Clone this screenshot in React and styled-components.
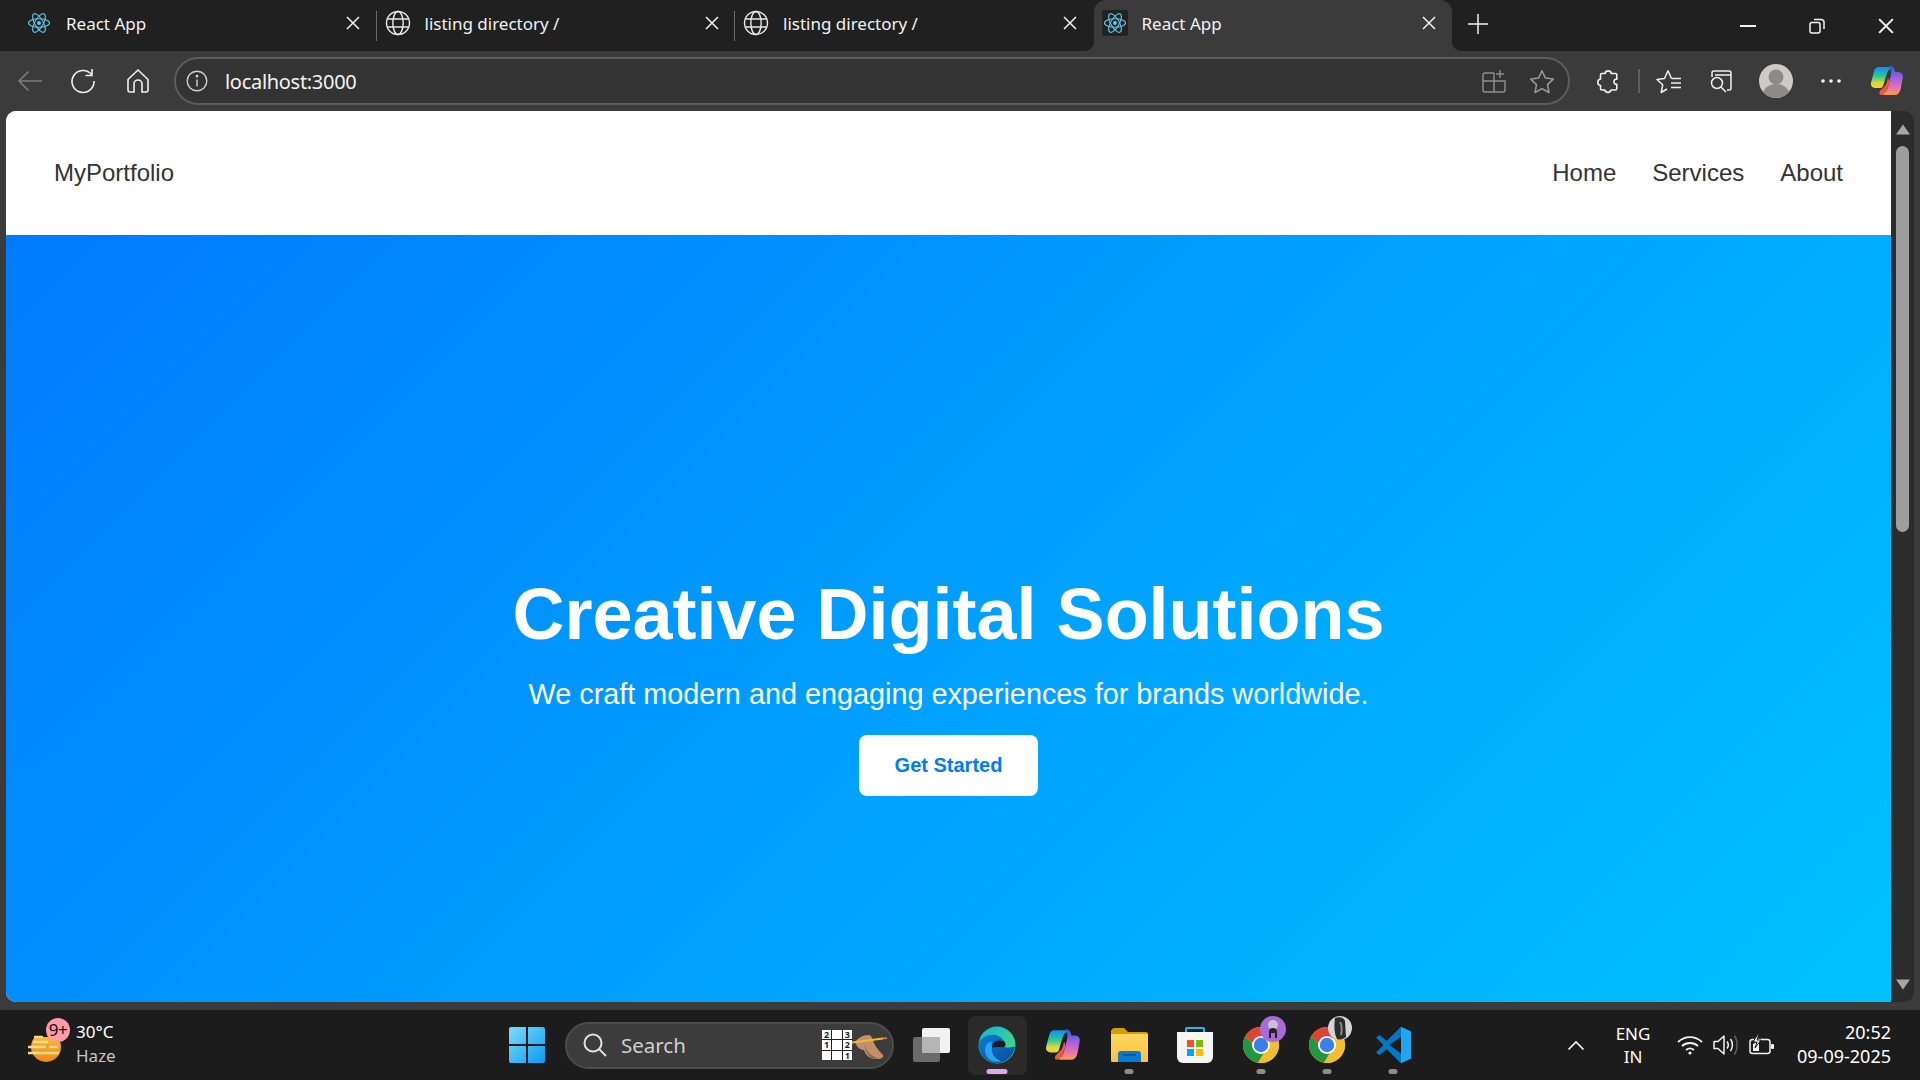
import styled, { createGlobalStyle } from 'styled-components'

const GlobalStyle = createGlobalStyle`
  html, body {
    margin: 0;
    padding: 0;
    height: 100%;
    overflow: hidden;
    background: #1c1c1c;
  }
  * { box-sizing: border-box; }
`

const ReactLogo = () => (
  <svg width="24" height="24" viewBox="-12 -12 24 24" fill="none" stroke="#61c6e6" strokeWidth="1.1">
    <ellipse rx="10.5" ry="4.2" />
    <ellipse rx="10.5" ry="4.2" transform="rotate(60)" />
    <ellipse rx="10.5" ry="4.2" transform="rotate(120)" />
    <circle r="2" fill="#61c6e6" stroke="none" />
  </svg>
)

const GlobeIcon = () => (
  <svg width="26" height="26" viewBox="0 0 26 26" fill="none" stroke="#e8e8e8" strokeWidth="1.4">
    <circle cx="13" cy="13" r="11.5" />
    <ellipse cx="13" cy="13" rx="5.2" ry="11.5" />
    <path d="M2.4 9h21.2M2.4 17h21.2" />
  </svg>
)

const CloseIcon = ({ size = 14, weight = 1.5 }) => (
  <svg width={size} height={size} viewBox="0 0 14 14" stroke="#f2f2f2" strokeWidth={weight}>
    <path d="M1 1l12 12M13 1L1 13" />
  </svg>
)

const BackIcon = () => (
  <svg width="26" height="24" viewBox="0 0 26 24" fill="none" stroke="#7d7d7d" strokeWidth="1.5">
    <path d="M25 12H2M11.5 2.5L2 12l9.5 9.5" />
  </svg>
)

const ReloadIcon = () => (
  <svg width="26" height="26" viewBox="0 0 26 26" fill="none" stroke="#f0f0f0" strokeWidth="1.6">
    <path d="M21.5 6.5A11 11 0 1 0 24 13" />
    <path d="M22 1v6.5h-6.5" />
  </svg>
)

const HomeIcon = () => (
  <svg width="24" height="26" viewBox="0 0 24 26" fill="none" stroke="#f0f0f0" strokeWidth="1.6">
    <path d="M2 11.5L12 2l10 9.5V22a2 2 0 0 1-2 2h-4v-8a4 4 0 0 0-8 0v8H4a2 2 0 0 1-2-2z" />
  </svg>
)

const InfoIcon = () => (
  <svg width="22" height="22" viewBox="0 0 22 22" fill="none" stroke="#d0d0d0" strokeWidth="1.4">
    <circle cx="11" cy="11" r="9.8" />
    <path d="M11 9.5v7" />
    <circle cx="11" cy="6.2" r="0.7" fill="#d0d0d0" />
  </svg>
)

const SplitIcon = () => (
  <svg width="24" height="24" viewBox="0 0 24 24" fill="none" stroke="#8f8f8f" strokeWidth="1.4">
    <path d="M12 4H3a2 2 0 0 0-2 2v15a2 2 0 0 0 2 2h18a2 2 0 0 0 2-2v-9H1M12 4v19" />
    <path d="M18 1v8M14 5h8" />
  </svg>
)

const StarIcon = () => (
  <svg width="26" height="25" viewBox="0 0 26 25" fill="none" stroke="#9a9a9a" strokeWidth="1.5">
    <path d="M13 1.8l3.4 7.3 7.9 1-5.8 5.5 1.5 7.9-7-3.9-7 3.9 1.5-7.9-5.8-5.5 7.9-1z" strokeLinejoin="round" />
  </svg>
)

const PuzzleIcon = () => (
  <svg width="24" height="25" viewBox="0 0 24 25" fill="none" stroke="#f0f0f0" strokeWidth="1.6">
    <path d="M9 4.5a3.2 3.2 0 0 1 6.3 0h4a1.5 1.5 0 0 1 1.5 1.5v4.2c-3.8-.6-3.8 5.600 0 5v4.300a1.500 1.500 0 0 1-1.500 1.500H15a3.200 3.200 0 0 1-6.200 0H6a1.500 1.500 0 0 1-1.500-1.500v-3a3.300 3.300 0 0 1 0-6.500V6A1.500 1.500 0 0 1 6 4.500z" strokeLinejoin="round" />
  </svg>
)

const FavoritesIcon = () => (
  <svg width="26" height="25" viewBox="0 0 26 25" fill="none" stroke="#f0f0f0" strokeWidth="1.5">
    <path d="M15.500 9.500L12 1.800 8.500 9.500l-7.500 1 5.700 5.300L5.200 23.500 11 20" strokeLinejoin="round" />
    <path d="M15.500 9.500H25M15 14h10M15 18.500h10" />
  </svg>
)

const CollectionsIcon = () => (
  <svg width="24" height="24" viewBox="0 0 24 24" fill="none" stroke="#f0f0f0" strokeWidth="1.5">
    <path d="M3 8V4a2 2 0 0 1 2-2h15a2 2 0 0 1 2 2v15a2 2 0 0 1-2 2h-2M6 6h16" />
    <circle cx="8" cy="14" r="5.500" />
    <path d="M12 18l5 5" />
  </svg>
)

const CopilotLogo = ({ size = 36, id = 'cop' }) => (
  <svg width={size} height={size} viewBox="0 0 36 36">
    <defs>
      <linearGradient id={`${id}A`} x1="0" y1="0" x2="0" y2="1">
        <stop offset="0" stopColor="#1592ec" />
        <stop offset="0.45" stopColor="#2fcb8f" />
        <stop offset="0.8" stopColor="#e8d53e" />
      </linearGradient>
      <linearGradient id={`${id}B`} x1="0" y1="0" x2="0" y2="1">
        <stop offset="0" stopColor="#2b5fd8" />
        <stop offset="0.4" stopColor="#a55ee0" />
        <stop offset="0.75" stopColor="#e56fb8" />
        <stop offset="1" stopColor="#f59a5a" />
      </linearGradient>
    </defs>
    <path
      d="M10 5h11c-3 1-4 4-5 8l-3 10c-.5 1-1 1-2 1H6c-2.500 0-3.500-2-3-4l3-11.500C6.500 6 8 5 10 5z"
      fill={`url(#${id}A)`}
      stroke={`url(#${id}A)`}
      strokeWidth="2"
      strokeLinejoin="round"
    />
    <path
      d="M21 4c2 0 3 1 3.500 3l.8 3h4c2.700 0 4 2 3.500 4.500l-2 11c-.8 3.500-2.500 5.500-5.500 5.500H15c3-1 4-3 5-7l3-12c.5-2 .5-5-2-8z"
      fill={`url(#${id}B)`}
      stroke={`url(#${id}B)`}
      strokeWidth="2"
      strokeLinejoin="round"
    />
    <path d="M15 24c2-1 3-5 4-9 1 2 2 3 0 8-1 4-3 9-7 9-2 0-2-2-1-4z" fill="#f0593a" />
  </svg>
)

const WeatherIcon = () => (
  <svg width="36" height="30" viewBox="0 0 36 30">
    <defs>
      <linearGradient id="sun" x1="0" y1="0" x2="0" y2="1">
        <stop offset="0" stopColor="#f9c23c" />
        <stop offset="1" stopColor="#ee8a15" />
      </linearGradient>
    </defs>
    <circle cx="18" cy="14" r="15" fill="url(#sun)" />
    <path d="M0 -2h36v6H0z" fill="#1c1c1c" />
    <path d="M7 4h7M6 9h13M0 14h17M22 14h7M0 20h30" stroke="#f1d992" strokeWidth="2.400" strokeLinecap="round" />
  </svg>
)

const WindowsLogo = () => (
  <svg width="36" height="36" viewBox="0 0 36 36">
    <defs>
      <linearGradient id="win" x1="0" y1="0" x2="1" y2="1">
        <stop offset="0" stopColor="#7ddbfb" />
        <stop offset="1" stopColor="#0a9bf2" />
      </linearGradient>
    </defs>
    <path d="M2 0h15v17H0V2a2 2 0 0 1 2-2zM19 0h15a2 2 0 0 1 2 2v15H19zM0 19h17v17H2a2 2 0 0 1-2-2zM19 19h17v15a2 2 0 0 1-2 2H19z" fill="url(#win)" />
  </svg>
)

const SearchGlass = () => (
  <svg width="24" height="24" viewBox="0 0 24 24" fill="none" stroke="#e0e0e0" strokeWidth="2">
    <circle cx="10" cy="10" r="8.500" />
    <path d="M16 16l7 7" />
  </svg>
)

const SudokuHand = () => (
  <svg width="36" height="30" viewBox="0 0 36 30">
    <path d="M3 12c3-4 8-7 13-7 3 0 4 2 5 5 1 5 5 10 10 15 1 2-1 4-6 4-7 0-11-3-13-9-3 0-7-2-9-8z" fill="#c0916c" />
    <path d="M12 14c3 8 7 13 15 14-6 2-12 0-15-14z" fill="#8f6547" />
    <path d="M0 12.500l31-4" stroke="#f2b632" strokeWidth="2" />
    <path d="M31 8.500l4-.5" stroke="#e0606a" strokeWidth="2" />
  </svg>
)

const TaskViewIcon = () => (
  <svg width="37" height="34" viewBox="0 0 37 34">
    <rect x="0" y="9" width="27" height="25" rx="2" fill="#6b6b6b" />
    <rect x="9" y="0" width="28" height="25" rx="2" fill="#f2f2f2" />
    <rect x="9" y="9" width="18" height="16" rx="1" fill="#b5b5b5" />
  </svg>
)

const EdgeLogo = () => (
  <svg width="38" height="38" viewBox="0 0 38 38">
    <defs>
      <linearGradient id="edgeA" x1="0" y1="0" x2="1" y2="1">
        <stop offset="0" stopColor="#0fb5d8" />
        <stop offset="1" stopColor="#55e06c" />
      </linearGradient>
      <linearGradient id="edgeB" x1="0" y1="0" x2="1" y2="1">
        <stop offset="0" stopColor="#0b7dd8" />
        <stop offset="1" stopColor="#0a4a9c" />
      </linearGradient>
    </defs>
    <circle cx="19" cy="19" r="18.500" fill="url(#edgeA)" />
    <path d="M1 17C4 8 20 5 26 15c2 3 2 5 0 6 7 2 10-2 11 0-1 9-10 17-20 16C7 36 0 27 1 17z" fill="url(#edgeB)" />
    <path d="M14 22c0-6 5-9 11-7 3 1 3 5 1 6-3 1-6-1-12 1z" fill="#1c1c1c" />
    <path d="M14 22c-1 6 3 11 9 13-7 3-16-2-16-11 0-5 3-8 7-9-1 2 0 5 0 7z" fill="#2aa4ef" />
  </svg>
)

const FolderLogo = () => (
  <svg width="37" height="34" viewBox="0 0 37 34">
    <defs>
      <linearGradient id="fold" x1="0" y1="0" x2="0" y2="1">
        <stop offset="0" stopColor="#ffd75e" />
        <stop offset="1" stopColor="#f9c33c" />
      </linearGradient>
    </defs>
    <path d="M1 2a2 2 0 0 1 2-2h10l4 4h18a2 2 0 0 1 2 2v6H0V2z" fill="#d69e06" />
    <path d="M0 6h36a1 1 0 0 1 1 1v26a1 1 0 0 1-1 1H1a1 1 0 0 1-1-1z" fill="url(#fold)" />
    <path d="M7 34v-8a3 3 0 0 1 3-3h17a3 3 0 0 1 3 3v8z" fill="#0d78cf" />
    <path d="M12 27h13" stroke="#0a4f96" strokeWidth="1.500" />
  </svg>
)

const StoreLogo = () => (
  <svg width="36" height="36" viewBox="0 0 36 36">
    <path d="M9 6V2a1 1 0 0 1 1-1h16a1 1 0 0 1 1 1v4" fill="none" stroke="#25b6ee" strokeWidth="2" />
    <path d="M0 5h36v25a6 6 0 0 1-6 6H6a6 6 0 0 1-6-6z" fill="#f5f5f5" />
    <rect x="10" y="13" width="7" height="7" fill="#f25022" />
    <rect x="19" y="13" width="7" height="7" fill="#7fba00" />
    <rect x="10" y="22" width="7" height="7" fill="#00a4ef" />
    <rect x="19" y="22" width="7" height="7" fill="#ffb900" />
  </svg>
)

const ChromeLogo = () => (
  <svg width="38" height="38" viewBox="-19 -19 38 38">
    <circle r="18" fill="#f1bf2d" />
    <path d="M-15.600 -9A18 18 0 0 1 16.800 -6.500L0 -6.500L-6 3Z" fill="#dc4437" />
    <path d="M-15.600 -9A18 18 0 0 0 -3 17.700L6 3L-6 3Z" fill="#23963f" />
    <path d="M16.800 -6.500A18 18 0 0 1 -3 17.700L6 3L6 -6Z" fill="#f1bf2d" />
    <circle r="9" fill="#fff" />
    <circle r="7.200" fill="#3b7fe8" />
  </svg>
)

const PurpleBadge = () => (
  <svg width="26" height="26" viewBox="0 0 26 26">
    <circle cx="13" cy="13" r="13" fill="#a86bd6" />
    <circle cx="13" cy="9" r="5" fill="#c9c2cf" />
    <path d="M9 22v-6a4 4 0 0 1 8 0v6h-2v-5h-4v5z" fill="#26222a" />
  </svg>
)

const GreyBadge = () => (
  <svg width="24" height="24" viewBox="0 0 24 24">
    <circle cx="12" cy="12" r="12" fill="#d5d5d5" />
    <path d="M7 2c5-2 9 0 10 3l1 16c-4 3-7 3-9 2-3-6-3-14-2-21z" fill="#2c2c2c" />
    <path d="M12 6c2 3 2 8 1 13" stroke="#8a8a8a" strokeWidth="2" fill="none" />
  </svg>
)

const VSCodeLogo = () => (
  <svg width="36" height="36" viewBox="0 0 36 36">
    <path d="M26 0l10 4.500v27L26 36 8 18z" fill="#1f9cf0" />
    <path d="M26 0v36L12 22 4.500 28 1 25.500 8.500 18 1 10.500 4.500 8 12 14z" fill="#0078c8" />
    <path d="M26 9.500L14.500 18 26 26.500z" fill="#1c1c1c" />
    <path d="M26 0l10 4.500v27L26 36z" fill="#22a5f1" />
  </svg>
)

const ChevronUp = () => (
  <svg width="18" height="11" viewBox="0 0 18 11" fill="none" stroke="#f2f2f2" strokeWidth="1.700">
    <path d="M1.500 9.500L9 2l7.500 7.500" />
  </svg>
)

const WifiIcon = () => (
  <svg width="26" height="20" viewBox="0 0 26 20" fill="none" stroke="#f2f2f2" strokeWidth="1.800">
    <path d="M1 7c7-6.500 17-6.500 24 0M5 11c4.500-4 11.500-4 16 0M9 15c2.500-2 5.500-2 8 0" />
    <circle cx="13" cy="18" r="1.600" fill="#f2f2f2" stroke="none" />
  </svg>
)

const SpeakerIcon = () => (
  <svg width="26" height="22" viewBox="0 0 26 22" fill="none" stroke="#f2f2f2" strokeWidth="1.500">
    <path d="M1 7.500h4L11 2v18l-6-5.500H1z" strokeLinejoin="round" />
    <path d="M14 7.500c1.500 2 1.500 5 0 7M17.500 5c2.500 3.500 2.500 8.500 0 12" />
    <path d="M21.500 1.500c3.500 5.500 3.500 13.500 0 19" stroke="#5f5f5f" />
  </svg>
)

const BatteryIcon = () => (
  <svg width="26" height="22" viewBox="0 0 26 22" fill="none">
    <rect x="1" y="5.500" width="20" height="14" rx="2.500" stroke="#f2f2f2" strokeWidth="1.500" />
    <rect x="22" y="10" width="3" height="5" rx="1" fill="#f2f2f2" />
    <path d="M4 17v-7l6-3v10z" fill="#f2f2f2" />
    <path d="M9 0L4 8h4l-2 6 6-8H8l2-6z" fill="#f2f2f2" stroke="#1c1c1c" />
  </svg>
)

const tabs = [
  { title: 'React App', icon: <ReactLogo />, divider: true },
  { title: 'listing directory /', icon: <GlobeIcon />, divider: true },
  { title: 'listing directory /', icon: <GlobeIcon /> },
  { title: 'React App', icon: <ReactLogo />, active: true },
]

const sudoku = ['2', '', '3', '1', '', '2', '', '', '1']

const App = () => {
  return (
    <Screen>
      <GlobalStyle />
      <TabStrip>
        {tabs.map((tab, i) => (
          <Tab key={i} $active={tab.active} $divider={tab.divider}>
            <TabIcon $active={tab.active}>{tab.icon}</TabIcon>
            <TabTitle>{tab.title}</TabTitle>
            <TabClose>
              <CloseIcon />
            </TabClose>
          </Tab>
        ))}
        <NewTab>
          <svg width="22" height="22" viewBox="0 0 22 22" stroke="#f2f2f2" strokeWidth="1.500">
            <path d="M11 1v20M1 11h20" />
          </svg>
        </NewTab>
        <WindowControls>
          <WindowButton>
            <svg width="16" height="2" viewBox="0 0 16 2">
              <rect width="16" height="2" fill="#f2f2f2" />
            </svg>
          </WindowButton>
          <WindowButton>
            <svg width="16" height="16" viewBox="0 0 16 16" fill="none" stroke="#f2f2f2" strokeWidth="1.500">
              <rect x="1" y="4.500" width="10" height="10.500" rx="2" />
              <path d="M5 1.500h7a3 3 0 0 1 3 3V11" />
            </svg>
          </WindowButton>
          <WindowButton>
            <CloseIcon size={16} weight={1.8} />
          </WindowButton>
        </WindowControls>
      </TabStrip>

      <Toolbar>
        <ToolButton $width={59}>
          <BackIcon />
        </ToolButton>
        <ToolButton $width={48}>
          <ReloadIcon />
        </ToolButton>
        <ToolButton $width={62}>
          <HomeIcon />
        </ToolButton>
        <AddressBar>
          <InfoIcon />
          <AddressText>localhost:3000</AddressText>
          <AddressActions>
            <SplitIcon />
            <StarIcon />
          </AddressActions>
        </AddressBar>
        <ToolIcons>
          <ToolButton $width={50}>
            <PuzzleIcon />
          </ToolButton>
          <ToolDivider />
          <ToolButton $width={49}>
            <FavoritesIcon />
          </ToolButton>
          <ToolButton $width={56}>
            <CollectionsIcon />
          </ToolButton>
          <ToolButton $width={54}>
            <Avatar>
              <svg width="34" height="34" viewBox="0 0 34 34">
                <circle cx="17" cy="13" r="7.500" fill="#8e8b86" />
                <path d="M4 28c3-6 8-8 13-8s10 2 13 8c-3 4-8 6-13 6s-10-2-13-6z" fill="#8e8b86" />
              </svg>
            </Avatar>
          </ToolButton>
          <ToolButton $width={55}>
            <svg width="20" height="4" viewBox="0 0 20 4" fill="#f2f2f2">
              <circle cx="2" cy="2" r="1.800" />
              <circle cx="10" cy="2" r="1.800" />
              <circle cx="18" cy="2" r="1.800" />
            </svg>
          </ToolButton>
          <ToolButton $width={58}>
            <CopilotLogo id="copTool" />
          </ToolButton>
        </ToolIcons>
      </Toolbar>

      <Workspace>
        <Page>
          <NavBar>
            <Brand>MyPortfolio</Brand>
            <NavLinks>
              <NavLink>Home</NavLink>
              <NavLink>Services</NavLink>
              <NavLink>About</NavLink>
            </NavLinks>
          </NavBar>
          <Hero>
            <HeroTitle>Creative Digital Solutions</HeroTitle>
            <HeroText>We craft modern and engaging experiences for brands worldwide.</HeroText>
            <HeroButton>Get Started</HeroButton>
          </Hero>
        </Page>
        <Scrollbar>
          <ScrollArrow viewBox="0 0 14 11">
            <path d="M7 0.500L14 10.500H0z" />
          </ScrollArrow>
          <ScrollThumb />
          <ScrollArrow viewBox="0 0 14 11">
            <path d="M7 10.500L14 0.500H0z" />
          </ScrollArrow>
        </Scrollbar>
      </Workspace>

      <Taskbar>
        <Weather>
          <WeatherGlyph>
            <WeatherIcon />
            <NotifyBadge>9+</NotifyBadge>
          </WeatherGlyph>
          <WeatherText>
            <Temp>30°C</Temp>
            <Condition>Haze</Condition>
          </WeatherText>
        </Weather>
        <TaskSlot>
          <WindowsLogo />
        </TaskSlot>
        <SearchBox>
          <SearchGlass />
          <SearchLabel>Search</SearchLabel>
          <SudokuBox>
            <SudokuGrid>
              {sudoku.map((n, i) => (
                <SudokuCell key={i}>{n}</SudokuCell>
              ))}
            </SudokuGrid>
            <SudokuHand />
          </SudokuBox>
        </SearchBox>
        <TaskSlot>
          <TaskViewIcon />
        </TaskSlot>
        <TaskSlot $focused>
          <EdgeLogo />
          <RunDot $active />
        </TaskSlot>
        <TaskSlot>
          <CopilotLogo size={38} id="copTask" />
        </TaskSlot>
        <TaskSlot>
          <FolderLogo />
          <RunDot />
        </TaskSlot>
        <TaskSlot>
          <StoreLogo />
        </TaskSlot>
        <TaskSlot>
          <ChromeLogo />
          <ChromeBadge>
            <PurpleBadge />
          </ChromeBadge>
          <RunDot />
        </TaskSlot>
        <TaskSlot>
          <ChromeLogo />
          <ChromeBadge>
            <GreyBadge />
          </ChromeBadge>
          <RunDot />
        </TaskSlot>
        <TaskSlot>
          <VSCodeLogo />
          <RunDot />
        </TaskSlot>
        <Tray>
          <TrayIcon $width={40}>
            <ChevronUp />
          </TrayIcon>
          <Language>
            <span>ENG</span>
            <span>IN</span>
          </Language>
          <SystemIcons>
            <WifiIcon />
            <SpeakerIcon />
            <BatteryIcon />
          </SystemIcons>
          <Clock>
            <span>20:52</span>
            <span>09-09-2025</span>
          </Clock>
        </Tray>
      </Taskbar>
    </Screen>
  )
}

export default App

const Screen = styled.div`
  width: 1920px;
  height: 1080px;
  display: flex;
  flex-direction: column;
  overflow: hidden;
  background: #3b3b3b;
  font-family: 'Noto Sans', 'Open Sans', sans-serif;
`

const TabStrip = styled.div`
  height: 51px;
  flex: none;
  display: flex;
  padding-left: 18px;
  background: #202020;
`

const Tab = styled.div`
  position: relative;
  width: 358.5px;
  height: 51px;
  display: flex;
  align-items: center;
  padding: 0 13px 5px 8px;
  color: #f2f2f2;
  background: ${p => (p.$active ? '#3b3b3b' : 'transparent')};
  border-radius: ${p => (p.$active ? '12px 12px 0 0' : '0')};

  ${p =>
    p.$divider &&
    `&::after {
      content: '';
      position: absolute;
      right: 0;
      top: 11px;
      width: 1px;
      height: 30px;
      background: #6a6a6a;
    }`}

  ${p =>
    p.$active &&
    `&::before, &::after {
      content: '';
      position: absolute;
      bottom: 0;
      width: 10px;
      height: 10px;
    }
    &::before {
      left: -10px;
      background: radial-gradient(circle at 0 0, transparent 10px, #3b3b3b 10.5px);
    }
    &::after {
      right: -10px;
      background: radial-gradient(circle at 100% 0, transparent 10px, #3b3b3b 10.5px);
    }`}
`

const TabIcon = styled.div`
  width: 26px;
  height: 26px;
  flex: none;
  display: flex;
  align-items: center;
  justify-content: center;
  border-radius: 2px;
  background: ${p => (p.$active ? '#222' : 'transparent')};
`

const TabTitle = styled.span`
  flex: 1;
  margin-left: 14px;
  font-size: 17px;
`

const TabClose = styled.div`
  width: 14px;
  height: 14px;
  display: flex;
  margin-right: 3.500px;
`

const NewTab = styled.div`
  width: 52px;
  height: 48px;
  display: flex;
  align-items: center;
  justify-content: center;
`

const WindowControls = styled.div`
  margin-left: auto;
  display: flex;
`

const WindowButton = styled.div`
  width: 69px;
  height: 51px;
  display: flex;
  align-items: center;
  justify-content: center;
`

const Toolbar = styled.div`
  height: 60px;
  flex: none;
  display: flex;
  align-items: center;
  background: #3b3b3b;
`

const ToolButton = styled.div`
  width: ${p => p.$width}px;
  height: 44px;
  flex: none;
  display: flex;
  align-items: center;
  justify-content: center;
`

const AddressBar = styled.div`
  width: 1396px;
  height: 48px;
  margin-left: 5px;
  flex: none;
  display: flex;
  align-items: center;
  padding: 0 13px 0 10px;
  border: 2px solid #5c5c5c;
  border-radius: 24px;
  background: #333333;
`

const AddressText = styled.span`
  margin-left: 17px;
  font-size: 20px;
  letter-spacing: -0.3px;
  color: #f4f4f4;
`

const AddressActions = styled.div`
  margin-left: auto;
  width: 73px;
  display: flex;
  align-items: center;
  justify-content: space-between;
`

const ToolIcons = styled.div`
  display: flex;
  align-items: center;
  margin-left: 13px;
`

const ToolDivider = styled.div`
  width: 2px;
  height: 24px;
  flex: none;
  margin: 0 4px 0 5px;
  background: #5f5f5f;
`

const Avatar = styled.div`
  width: 34px;
  height: 34px;
  border-radius: 50%;
  overflow: hidden;
  background: #cdcbc6;
`

const Workspace = styled.div`
  height: 891px;
  flex: none;
  display: flex;
  padding-left: 6px;
`

const Page = styled.div`
  width: 1885px;
  height: 891px;
  overflow: hidden;
  border-radius: 10px 0 0 10px;
  background: #fff;
  font-family: 'Liberation Sans', Arial, sans-serif;
`

const NavBar = styled.nav`
  height: 124px;
  display: flex;
  align-items: center;
  justify-content: space-between;
  padding: 0 48px;
  background: #fff;
  color: #333;
`

const Brand = styled.div`
  font-size: 24px;
`

const NavLinks = styled.div`
  display: flex;
  gap: 36px;
`

const NavLink = styled.a`
  font-size: 24px;
  color: #333;
`

const Hero = styled.section`
  height: 896px;
  padding-top: 3px;
  display: flex;
  flex-direction: column;
  align-items: center;
  justify-content: center;
  background: linear-gradient(135deg, #007bff, #00c6ff);
  color: #fff;
`

const HeroTitle = styled.h1`
  margin: 0 0 22px;
  font-size: 72px;
  line-height: 83px;
  font-weight: 700;
`

const HeroText = styled.p`
  margin: 0 0 24px;
  font-size: 28.800px;
  line-height: 33px;
`

const HeroButton = styled.button`
  width: 179px;
  height: 61px;
  border: 0;
  border-radius: 8px;
  background: #fff;
  color: #007bff;
  font-family: inherit;
  font-size: 20px;
  font-weight: 700;
`

const Scrollbar = styled.div`
  width: 23px;
  height: 891px;
  flex: none;
  display: flex;
  flex-direction: column;
  align-items: center;
  padding: 13px 0 12px;
  border-radius: 0 10px 10px 0;
  background: #2c2c2c;
`

const ScrollArrow = styled.svg`
  width: 14px;
  height: 11px;
  flex: none;
  fill: #a6a6a6;
`

const ScrollThumb = styled.div`
  width: 13px;
  height: 386px;
  margin: 11px 0 auto;
  border-radius: 7px;
  background: #9e9e9e;
`

const Taskbar = styled.footer`
  height: 70px;
  flex: none;
  margin-top: 8px;
  display: flex;
  align-items: center;
  background: #1c1c1c;
  color: #fff;
`

const Weather = styled.div`
  width: 494px;
  flex: none;
  display: flex;
  align-items: center;
  padding-left: 28px;
`

const WeatherGlyph = styled.div`
  position: relative;
  width: 36px;
  height: 30px;
  margin-top: 6px;
`

const NotifyBadge = styled.div`
  position: absolute;
  top: -15px;
  left: 18px;
  width: 24px;
  height: 24px;
  border-radius: 50%;
  background: #ff9aa9;
  color: #111;
  font-size: 17px;
  line-height: 24px;
  text-align: center;
  letter-spacing: -0.5px;
`

const WeatherText = styled.div`
  margin-left: 12px;
  padding-bottom: 3px;
  display: flex;
  flex-direction: column;
  gap: 2px;
  font-size: 17px;
  line-height: 22px;
`

const Temp = styled.span`
  color: #fff;
`

const Condition = styled.span`
  color: #c4c4c4;
`

const TaskSlot = styled.div`
  position: relative;
  width: 66px;
  height: 59px;
  flex: none;
  display: flex;
  align-items: center;
  justify-content: center;
  ${p =>
    p.$focused &&
    `background: #2a2a2a;
    border-radius: 7px;
    width: 59px;
    margin: 0 3.500px;`}
`

const RunDot = styled.span`
  position: absolute;
  left: 50%;
  bottom: 1px;
  height: 5px;
  width: ${p => (p.$active ? '21px' : '9px')};
  transform: translateX(-50%);
  border-radius: 3px;
  background: ${p => (p.$active ? '#e4a4ea' : '#8d8d8d')};
`

const ChromeBadge = styled.span`
  position: absolute;
  top: 0;
  right: 8px;
  display: flex;
`

const SearchBox = styled.div`
  width: 329px;
  height: 47px;
  flex: none;
  margin: 0 4px 0 5px;
  display: flex;
  align-items: center;
  padding-left: 16px;
  border: 2px solid #4c4c4c;
  border-radius: 24px;
  background: #3c3c3c;
`

const SearchLabel = styled.span`
  margin-left: 14px;
  font-size: 20.500px;
  color: #cfcfcf;
`

const SudokuBox = styled.div`
  display: flex;
  align-items: flex-end;
  margin-left: auto;
  margin-right: 4px;
`

const SudokuGrid = styled.div`
  width: 30px;
  height: 30px;
  display: grid;
  grid-template-columns: repeat(3, 1fr);
  grid-template-rows: repeat(3, 1fr);
  gap: 1px;
  background: #222;
`

const SudokuCell = styled.span`
  background: #fff;
  color: #222;
  font-size: 9px;
  line-height: 9px;
  font-weight: 700;
  text-align: center;
`

const Tray = styled.div`
  margin-left: auto;
  display: flex;
  align-items: center;
  padding-right: 29px;
`

const TrayIcon = styled.div`
  width: ${p => p.$width}px;
  display: flex;
  justify-content: center;
`

const Language = styled.div`
  width: 60px;
  margin-left: 7px;
  display: flex;
  flex-direction: column;
  align-items: center;
  font-size: 17px;
  line-height: 23px;
`

const SystemIcons = styled.div`
  display: flex;
  align-items: center;
  gap: 10px;
  margin-left: 14px;
`

const Clock = styled.div`
  margin-left: 22px;
  padding-bottom: 3px;
  display: flex;
  flex-direction: column;
  align-items: flex-end;
  font-size: 18px;
  line-height: 24px;
`
